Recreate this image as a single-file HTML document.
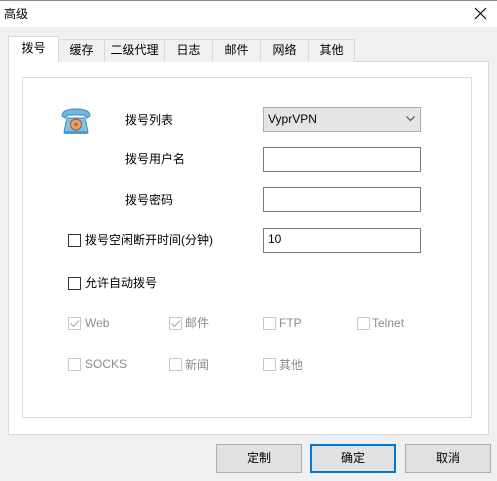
<!DOCTYPE html>
<html><head><meta charset="utf-8"><style>
*{margin:0;padding:0;box-sizing:border-box}
body{width:497px;height:481px;background:#f0f0f0;position:relative;overflow:hidden;font-family:"Liberation Sans","Noto Sans CJK SC",sans-serif;font-size:12px;color:#000}
.a{position:absolute}
.title{left:0;top:0;width:497px;height:27px;background:#fff;border-top:1px solid #8a8a8a}
.tab{position:absolute;top:39px;height:23px;background:#f0f0f0;border:1px solid #d9d9d9;border-bottom:none;text-align:center;line-height:21px;font-size:12px}
.panel{left:8px;top:61px;width:481px;height:374px;background:#fff;border:1px solid #d9d9d9}
.inner{left:22px;top:77px;width:450px;height:341px;border:1px solid #dcdcdc}
.lbl{position:absolute;font-size:12px;line-height:16px}
.inp{position:absolute;left:263px;width:158px;height:25px;border:1px solid #7a7a7a;background:#fff;font-size:12px;padding:3px 0 0 4px}
.cb{position:absolute;width:13px;height:13px;border:1px solid #333;background:#fff}
.cbd{border-color:#c8c8c8}
.dis{color:#8c8c8c}
.btn{position:absolute;top:444px;height:29px;width:86px;background:#e1e1e1;border:1px solid #adadad;text-align:center;line-height:27px;font-size:12px}
</style></head><body>
<div class="a title"></div>
<div class="a" style="left:4px;top:5px;font-size:12px">高级</div>
<svg class="a" style="left:474px;top:7px" width="13" height="13" viewBox="0 0 13 13"><path d="M1 1L12 12M12 1L1 12" stroke="#000" stroke-width="1.1"/></svg>

<div class="a panel"></div>
<div class="tab" style="left:58px;width:47px">缓存</div>
<div class="tab" style="left:104px;width:61px">二级代理</div>
<div class="tab" style="left:164px;width:49px">日志</div>
<div class="tab" style="left:212px;width:49px">邮件</div>
<div class="tab" style="left:260px;width:49px">网络</div>
<div class="tab" style="left:308px;width:47px">其他</div>
<div class="tab" style="left:8px;top:36px;width:51px;height:26px;background:#fff;line-height:22px">拨号</div>
<div class="a inner"></div>

<svg class="a" style="left:60px;top:106px" width="32" height="30" viewBox="0 0 32 30">
<path d="M2 10 Q2 3 16 3 Q30 3 30 10 L27 12 L24 9 L8 9 L5 12 Z" fill="#6fb8e0" stroke="#3a87b8" stroke-width="1"/>
<path d="M7 12 L25 12 L28 26 L4 26 Z" fill="#7cc3ea" stroke="#3a87b8" stroke-width="1"/>
<rect x="4" y="25" width="24" height="3" rx="1" fill="#4a9ad0"/>
<circle cx="16" cy="18.5" r="5.5" fill="#e8a36b" stroke="#9a5a2a" stroke-width="1"/>
<circle cx="16" cy="18.5" r="2" fill="#c07040"/>
</svg>

<div class="lbl" style="left:125px;top:112px">拨号列表</div>
<div class="lbl" style="left:125px;top:151px">拨号用户名</div>
<div class="lbl" style="left:125px;top:192px">拨号密码</div>

<div class="a" style="left:263px;top:107px;width:158px;height:25px;background:#e5e5e5;border:1px solid #adadad;font-size:12px;padding:4px 0 0 4px">VyprVPN</div>
<svg class="a" style="left:406px;top:116px" width="9" height="6" viewBox="0 0 9 6"><path d="M0.5 0.5L4.5 4.5L8.5 0.5" stroke="#444" fill="none"/></svg>

<div class="inp" style="top:147px"></div>
<div class="inp" style="top:187px"></div>
<div class="inp" style="top:228px">10</div>

<div class="cb" style="left:68px;top:234px"></div>
<div class="lbl" style="left:85px;top:232px">拨号空闲断开时间(分钟)</div>
<div class="cb" style="left:68px;top:277px"></div>
<div class="lbl" style="left:85px;top:275px">允许自动拨号</div>

<div class="cb cbd" style="left:68px;top:317px"></div>
<svg class="a" style="left:69px;top:318px" width="11" height="11"><path d="M1.5 5.5L4.5 8.5L10 2.5" stroke="#a8a8a8" fill="none"/></svg>
<div class="lbl dis" style="left:85px;top:315px">Web</div>
<div class="cb cbd" style="left:169px;top:317px"></div>
<svg class="a" style="left:170px;top:318px" width="11" height="11"><path d="M1.5 5.5L4.5 8.5L10 2.5" stroke="#a8a8a8" fill="none"/></svg>
<div class="lbl dis" style="left:185px;top:315px">邮件</div>
<div class="cb cbd" style="left:263px;top:317px"></div>
<div class="lbl dis" style="left:279px;top:315px">FTP</div>
<div class="cb cbd" style="left:357px;top:317px"></div>
<div class="lbl dis" style="left:372px;top:315px">Telnet</div>

<div class="cb cbd" style="left:68px;top:358px"></div>
<div class="lbl dis" style="left:85px;top:356px">SOCKS</div>
<div class="cb cbd" style="left:169px;top:358px"></div>
<div class="lbl dis" style="left:185px;top:357px">新闻</div>
<div class="cb cbd" style="left:263px;top:358px"></div>
<div class="lbl dis" style="left:279px;top:357px">其他</div>

<div class="btn" style="left:216px">定制</div>
<div class="btn" style="left:310px;border:2px solid #0078d7;line-height:25px">确定</div>
<div class="btn" style="left:405px">取消</div>
</body></html>
